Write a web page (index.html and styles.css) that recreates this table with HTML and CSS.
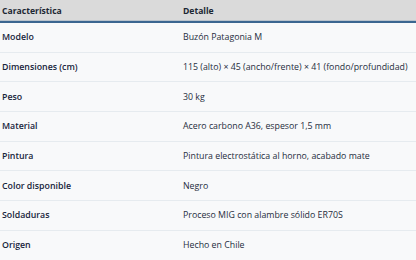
FILE: index.html
```html
<!DOCTYPE html>
<html lang="es">
<head>
<meta charset="UTF-8">
<meta name="viewport" content="width=device-width, initial-scale=1.0">
<title>Ficha técnica</title>
<link rel="stylesheet" href="styles.css">
</head>
<body>

<table class="specs">
    <thead>
        <tr>
            <th>Característica</th>
            <th>Detalle</th>
        </tr>
    </thead>
    <tbody>
        <tr><td>Modelo</td><td>Buzón Patagonia M</td></tr>
        <tr><td>Dimensiones (cm)</td><td>115 (alto) × 45 (ancho/frente) × 41 (fondo/profundidad)</td></tr>
        <tr><td>Peso</td><td>30 kg</td></tr>
        <tr><td>Material</td><td>Acero carbono A36, espesor 1,5 mm</td></tr>
        <tr><td>Pintura</td><td>Pintura electrostática al horno, acabado mate</td></tr>
        <tr><td>Color disponible</td><td>Negro</td></tr>
        <tr><td>Soldaduras</td><td>Proceso MIG con alambre sólido ER70S</td></tr>
        <tr><td>Origen</td><td>Hecho en Chile</td></tr>
    </tbody>
</table>

</body>
</html>
```

FILE: styles.css
```css
body {
    margin: 0;
    font-family: "Open Sans", Arial, sans-serif;
    background-color: #f8f9fa;
    color: #1f2d3d;
}

.specs {
    width: 100%;
    border-collapse: collapse;
    font-size: 8.8px;
}

.specs th {
    height: 21px;
    padding: 0 2px;
    text-align: left;
    font-size: 8.6px;
    font-weight: 700;
    color: #1c2733;
    background-color: #dadada;
    border-bottom: 2px solid #3b6690;
    box-shadow: inset 0 -1px 0 #b9c3cc;
}

.specs td {
    height: 28.7px;
    padding: 0 2px;
    text-align: left;
    font-weight: 500;
    border-bottom: 1px solid #e6ebef;
}

.specs th:first-child,
.specs td:first-child {
    width: 177px;
}

/* first column holds the labels, a bit heavier */
.specs td:first-child {
    font-weight: 600;
    color: #17243a;
}
```
